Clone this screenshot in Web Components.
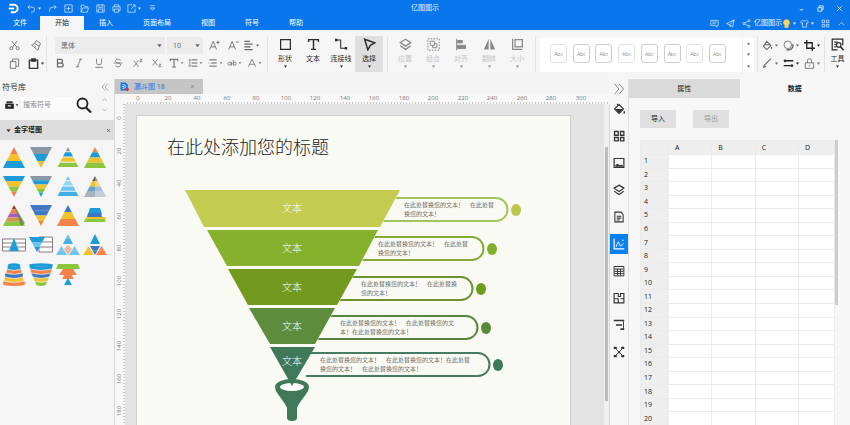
<!DOCTYPE html>
<html lang="zh-CN">
<head>
<meta charset="utf-8">
<title>亿图图示</title>
<style>
html,body{margin:0;height:100%}
body{font:7px/10px "Open Sans","Noto Sans CJK SC",sans-serif;color:#333;background:#f5f5f5;overflow:hidden}
</style>
</head>
<body>
<app-shell></app-shell>
<script>
const RESET = `:host,*{box-sizing:border-box}button,select,input{font:inherit;color:inherit;border:0;background:none;margin:0;padding:0;border-radius:0;outline:0}button{display:flex;align-items:center;justify-content:center;white-space:nowrap}`;

function define(name, render) {
  customElements.define(name, class extends HTMLElement {
    connectedCallback() {
      if (this.shadowRoot) return;
      this.attachShadow({ mode: 'open' }).innerHTML = render(this);
    }
  });
}

/* Line icons on a 16-unit grid */
const ICONS = {
  logo: '<path d="M2 2.5h6.5a5.5 5.5 0 0 1 0 11H4" stroke-width="2.8"/><path d="M1 8h8" stroke-width="2.6"/>',
  undo: '<path d="M5 2 1.500 5.500 5 9M2 5.500h7a4.500 4.500 0 0 1 0 9H7"/>',
  redo: '<path d="m11 2 3.500 3.500L11 9M14 5.500H8A5 5 0 0 0 3 11v3"/>',
  plus: '<path d="M1.500 1.500h13v13h-13zM8 4.500v7M4.500 8h7"/>',
  folder: '<path d="M2 14V2h5l2 2.500h4V7M2 14.500h11l2-7.500H5z"/>',
  save: '<path d="M1.500 1.500h13v13h-13zM5 2v4h6V2M4 14V9h8v5"/>',
  print: '<path d="M4 5V1.500h8V5M4 11.500H1.500V5h13v6.500H12M4 9h8v5.500H4z"/>',
  export: '<path d="M9 1.500H1.500v13h13V8M7 9l7-7M10 1.500h4.500V6"/>',
  more: '<path d="M4 3h8M4 7l4 4 4-4z"/>',
  min: '<path d="M4 11h8" stroke-width="2"/>',
  restore: '<path d="M5 5V2h9v8h-3M2 6h9v8H2z" stroke-width="2"/>',
  close: '<path d="m3 3 10 10M13 3 3 13" stroke-width="2"/>',
  chat: '<path d="M1.500 2.500h13v9H12v3l-3-3H1.500zM4 5.500h8M4 8.500h6"/>',
  send: '<path d="M1 8 14.500 1.500 12 14l-5-3.500zM7 10.500V14l2-2M14 2 7 10"/>',
  share: '<circle cx="3.500" cy="8" r="2"/><circle cx="12.500" cy="3" r="2"/><circle cx="12.500" cy="13" r="2"/><path d="m5 7 6-3M5 9l6 3"/>',
  bulb: '<path d="M8 1a5.500 5.500 0 0 0-3 10v4h6v-4A5.500 5.500 0 0 0 8 1z" fill="#ffd56a" stroke="#f6c04a"/>',
  shirt: '<path d="M5 2 1 5l2 3 1.500-1v7.500h7V7L13 8l2-3-4-3c-1 2-5 2-6 0z"/>',
  apps: '<path d="M2 2h4.500v4.500H2zM9.500 2H14v4.500H9.500zM2 9.500h4.500V14H2zM9.500 9.500H14V14H9.500z"/>',
  grid: '<path d="M2 2h5v5H2zM10 2h4.500v5H10zM2 10h5v4.500H2zM10 10h4.500v4.500H10z" stroke-width="1.700"/>',
  up: '<path d="m3 11 5-5 5 5"/>',
  down: '<path d="m3 6 5 5 5-5"/>',
  dright: '<path d="m2 1 6 7-6 7M8 1l6 7-6 7"/>',
  dleft: '<path d="M8 1 2 8l6 7M14 1 8 8l6 7"/>',
  tri: '<path d="M3 5h10l-5 7z" fill="currentColor" stroke="none"/>',
  triup: '<path d="M3 11h10L8 4z" fill="currentColor" stroke="none"/>',
  cut: '<circle cx="3.500" cy="12" r="2.200"/><circle cx="12.500" cy="12" r="2.200"/><path d="m5 10 7-8.500M11 10 4 1.500"/>',
  brush: '<path d="m8 1 6 4-2 4-7-4zM5 5C3 7 2 7 1 7l9 8 2-6M5 11l2-2"/>',
  copy: '<path d="M2 5h8v10H2zM5 5V1.500h9V12h-4"/>',
  paste: '<path d="M2 3h12v12H2z" stroke-width="2"/><path d="M5 1h6v4H5z" fill="currentColor"/>',
  b: '<path d="M4 2h5a3 3 0 0 1 0 6H4zM4 8h6a3 3 0 0 1 0 6H4z" stroke-width="2"/>',
  i: '<path d="M8 2h5M3 14h5M10.500 2l-5 12"/>',
  u: '<path d="M4 1v6a4 4 0 0 0 8 0V1M2 15h12"/>',
  s: '<path d="M12 4c-1-3-8-3-8 1 0 2 2 2.500 4 3s4 1 4 3c0 4-7 4-8 1M1 8h14"/>',
  sup: '<path d="m1 4 8 10M9 4 1 14M11 2h3l-3 4h4"/>',
  sub: '<path d="m1 2 8 10M9 2 1 12M11 10h3l-3 4h4"/>',
  tt: '<path d="M2 5V2h12v3M8 2v11M5 14.500h6" stroke-width="1.700"/>',
  list: '<path d="M6 3h9M6 8h9M6 13h9" stroke-width="1.600"/><path d="M1 4l2-2 2 2M1 12l2 2 2-2M3 3v10"/>',
  lines: '<path d="M2 3h12M5 8h9M2 13h12M1 8h1" stroke-width="1.600"/>',
  ab: '<circle cx="4" cy="9" r="2.500"/><path d="M7 6v6M10 3v9"/><circle cx="12.500" cy="9" r="2.500"/>',
  a: '<path d="m2 14 6-12 6 12M4.500 10h7"/>',
  abig: '<path d="m1 14 5-12 5 12M3 10h6M13 1v5M10.500 3.500h5"/>',
  asmall: '<path d="m1 14 5-12 5 12M3 10h6M11.500 3h4"/>',
  align: '<path d="M2 2h8M2 6h12M2 10h9M2 14h12" stroke-width="1.500"/>',
  rect: '<path d="M2 2h12v12H2z" stroke-width="1.500"/>',
  text: '<path d="M2 5V2h12v3M8 2v12M5 14h6" stroke-width="1.800"/>',
  conn: '<path d="M1 2.500h6v10h6" stroke-width="1.300"/><path d="M0 1h3v3H0zM12 11h3v3h-3z" fill="currentColor" stroke="none"/>',
  cursor: '<path d="M2 1.500 14.500 6 9 9l-3 5.500z" stroke-width="1.800"/>',
  layers: '<path d="m8 1.500 6.500 4L8 10 1.500 5.500zM1.500 9.500 8 14l6.500-4.500" stroke-width="1.600"/>',
  group: '<path d="M1 1h14v14H1z" stroke-dasharray="2 1.500"/><path d="M4 4h5v5H4zM7 9v3h5V7H9"/>',
  left: '<path d="M2 1v14"/><path d="M3 3h6v3H3zM3 9h10v4H3z" fill="currentColor"/>',
  flip: '<path d="M7 1v13H1zM9 1v13h6z" fill="currentColor" stroke="none"/>',
  size: '<path d="M2 1v13h12M5 2h9v9H5z" stroke-width="1.500"/>',
  bucket: '<path d="m7 2 6 6-6 6-5-5zM4 7h8M14 10v3" stroke-width="1.500"/>',
  bucketf: '<path d="m8 2 6 6-6 6-6-6zM6 4V1" stroke-width="1.500"/><path d="M3 8h10l-5 6zM14 11h2v3h-2z" fill="currentColor" stroke="none"/>',
  shadow: '<circle cx="7" cy="7" r="5.500"/><path d="M5 14c6 2 11-3 9-8" stroke-width="2"/>',
  crop: '<path d="M4 0v12h12M0 4h12v12" stroke-width="1.900"/>',
  pen: '<path d="m2 14 1-3L13 1M2 14l4-2" stroke-width="1.600"/>',
  dash: '<path d="M1 4h14M1 11h14M3 2v4M13 9v4" stroke-width="1.900"/>',
  lock: '<path d="M2 7h12v8H2zM5 7V4a3 3 0 0 1 6 0v3M8 10v2"/>',
  tools: '<path d="M14.500 9V1.500h-13v13H8M4 5h4M4 8h2M4 11h2" stroke-width="1.500"/><circle cx="9.500" cy="8.500" r="2.800" stroke-width="1.500"/><path d="m11.500 10.500 4 4.500" stroke-width="2"/>',
  image: '<path d="M1.500 2h13v12h-13z" stroke-width="1.600"/><path d="M3 13v-2l3-2 3 2 2-1 3 2v1z" fill="currentColor" stroke="none"/>',
  doc: '<path d="M2.500 1.500h8l3 3v10h-11zM5 7h6M5 9.500h6M5 12h4" stroke-width="1.400"/>',
  chart: '<path d="M1.500 1v13.500H15" stroke-width="1.600"/><path d="m4 12 3-7 3 6 4-4M12 3h2"/>',
  table: '<path d="M1.500 2h13v12.500h-13zM2 5.500h12M2 8.500h12M2 11.500h12M6 5v9M10 5v9" stroke-width="1.300"/>',
  plan: '<path d="M1.500 2H7v4h3V2h4.500v12.500h-13zM2 9h5v5M10 9h4" stroke-width="1.500"/>',
  gantt: '<path d="M1 2h14M4 8h8M10 13.500h5" stroke-width="2.200"/><path d="M14 3v10"/>',
  mind: '<path d="m3 3 10 10M13 3 3 13"/><path d="M1 1h4v3H1zM11 1h4v3h-4zM1 12h4v3H1zM11 12h4v3h-4zM6.500 6.500h3v3h-3z" fill="currentColor" stroke="none"/>',
  search: '<circle cx="6.500" cy="6.500" r="5" stroke-width="1.800"/><path d="m10 10.500 5 5" stroke-width="2.200"/>',
  library: '<path d="M1 7h14v8H1zM3 3h10v2H3z" fill="currentColor"/><path d="M5 10.500h6" stroke="#fff" stroke-width="2"/>',
  file: '<path d="M1 1h9l4 4v10H1z" fill="#1677ea" stroke="none"/><path d="M4 5h3a3 3 0 0 1 0 6H4M4 8h3" stroke="#fff" stroke-width="1.500"/><circle cx="13" cy="13" r="3" fill="#d5304a" stroke="none"/>'
};
define('ui-icon', el => `<style>:host{display:inline-block;width:11px;height:11px;flex:none}svg{display:block;width:100%;height:100%}</style>
<svg viewBox="0 0 16 16" fill="none" stroke="currentColor" stroke-width="1.200" aria-hidden="true">${ICONS[el.getAttribute('name')]}</svg>`);

const icon = (n, c = '') => `<ui-icon name="${n}" class="${c}"></ui-icon>`;
const btn = (n, label, drop) => `<button aria-label="${label}">${icon(n)}${drop ? icon('tri', 'd') : ''}</button>`;

define('title-bar', () => `<style>${RESET}
:host{display:block;background:#0a76ec;color:#e9f3ff}
.top{display:grid;grid-template-columns:1fr auto 1fr;align-items:center;height:16px}
.quick{display:flex;align-items:center;padding-left:8px}
.quick button{width:16px;height:14px}.quick .logo{width:11px;height:11px;margin-right:5px;color:#fff}
.quick ui-icon{width:9px;height:9px}.quick .wide{width:20px}
ui-icon.d,.quick ui-icon.d{width:5px;height:5px;margin-left:1px}
h1{margin:0;font:inherit;font-size:7px}
.win{display:flex;justify-content:flex-end;padding-right:1px}.win button{width:19px;height:12px}.win ui-icon{width:7px;height:7px}
nav{display:flex;height:14px}
nav a{display:flex;align-items:center;padding:0 15px;color:#fff;text-decoration:none}
nav a:first-child{padding:0 13px}
nav a.on{background:#f5f5f5;color:#222}
.acct{display:flex;align-items:center;margin-left:auto;padding-right:1px}
.acct button{width:16px;height:14px}.acct ui-icon{width:9px;height:9px}.acct ui-icon.d{width:5px;height:5px}.acct .w{width:20px}
</style>
<div class="top"><div class="quick">${icon('logo', 'logo')}
<button class="wide" aria-label="撤销">${icon('undo')}${icon('tri', 'd')}</button>${btn('redo', '重做')}${btn('plus', '新建')}${btn('folder', '打开')}${btn('save', '保存')}${btn('print', '打印')}<button class="wide" aria-label="导出">${icon('export')}${icon('tri', 'd')}</button>${btn('more', '更多')}</div>
<h1>亿图图示</h1>
<div class="win">${btn('min', '最小化')}${btn('restore', '还原')}${btn('close', '关闭')}</div></div>
<nav>${['文件', '开始', '插入', '页面布局', '视图', '符号', '帮助'].map(t => `<a href="#"${t === '开始' ? ' class="on"' : ''}>${t}</a>`).join('')}
<div class="acct">${btn('chat', '反馈')}${btn('send', '发送')}${btn('share', '分享')}<span>亿图图示</span>${icon('bulb')}${icon('tri', 'd')}<button class="w" aria-label="主题">${icon('shirt')}${icon('tri', 'd')}</button>${btn('apps', '应用')}${btn('up', '收起')}</div></nav>`);

define('big-tool', el => `<style>${RESET}
:host{display:block;width:28px}:host([off]) button{color:#c6c6c6}:host([off]) ui-icon{color:#888}
:host([on]) button{background:#dedede}
button{flex-direction:column;justify-content:flex-start;width:100%;height:36px;padding-top:2px;color:#2b2b2b}
.m{width:13px;height:13px;margin-bottom:3px}.d{width:5px;height:5px}
</style><button>${icon(el.getAttribute('icon'), 'm')}<slot></slot>${el.hasAttribute('plain') ? '' : icon('tri', 'd')}</button>`);

define('tool-ribbon', () => `<style>${RESET}
:host{display:flex;align-items:stretch;height:49px;padding:6px 0 7px;background:#f5f5f5;color:#666}
section{display:flex;align-items:center;border-right:1px solid #e2e2e2;flex:none}
.d{width:5px;height:5px;margin-left:1px}
.clip{display:grid;grid-template-columns:23px 20px;grid-auto-rows:18px;width:47px;padding-left:3px}
.clip button:last-child{color:#333}
.font{display:flex;flex-direction:column;align-items:stretch;width:221px;padding:1px 6px 0 8px}
.r{display:flex;align-items:center;height:17px}
.pick{position:relative;display:flex;align-items:center;background:#ebebeb;height:17px;margin-right:2px}
.pick select{appearance:none;width:100%;height:100%;padding-left:6px;font-size:7px}
.pick ui-icon{position:absolute;right:2px;width:7px;height:7px;pointer-events:none}
.f{width:110px}.s{width:36px}.r>button{flex:1}
.fmt{display:grid;grid-template-columns:repeat(11,1fr);height:19px;margin:0 -3px 0 -5px}
.fmt ui-icon{width:10px;height:10px}.fmt ui-icon.d{width:4px;height:4px}
.ins{padding:0 4px 0 3px}.arr{padding:0 4px 0 3px}
.gal{flex:1 1 auto;justify-content:space-between;margin:2px 3px 0 4px;background:#fff;padding-left:10px;border:0}
.sw{display:flex;flex:1;justify-content:space-between;align-items:center;margin:-3px 16px 0 0}
.sw button{width:17px;height:19px;border:1px solid #ccc;border-radius:3px;font-size:5px;color:#888;background:#fff}
.sw button:nth-child(3n+1){border-color:#e2e2e2}
.sc{display:flex;flex-direction:column;justify-content:space-around;height:100%;width:12px;border-left:1px solid #eee}
.sc ui-icon{width:5px;height:5px}
.sty{display:grid;grid-template-columns:22px 20px 22px;grid-auto-rows:18px;border-left:1px solid #e2e2e2;padding:0 1px}
.dk{color:#222}.tools big-tool{width:25px}.tools{border:0}
</style>
<section class="clip">${btn('cut', '剪切')}${btn('brush', '格式刷')}${btn('copy', '复制')}${btn('paste', '粘贴', 1)}</section>
<section class="font"><div class="r"><label class="pick f"><select aria-label="字体"><option>黑体</option></select>${icon('tri')}</label><label class="pick s"><select aria-label="字号"><option>10</option></select>${icon('tri')}</label>${btn('abig', '增大字号')}${btn('asmall', '减小字号')}${btn('align', '对齐', 1)}</div>
<div class="fmt">${btn('b', '加粗')}${btn('i', '斜体')}${btn('u', '下划线')}${btn('s', '删除线')}${btn('sup', '上标')}${btn('sub', '下标')}${btn('tt', '文字', 1)}${btn('list', '行距', 1)}${btn('lines', '列表', 1)}${btn('ab', '大小写', 1)}${btn('a', '颜色', 1)}</div></section>
<section class="ins"><big-tool icon="rect">形状</big-tool><big-tool icon="text" plain>文本</big-tool><big-tool icon="conn">连接线</big-tool><big-tool icon="cursor" on>选择</big-tool></section>
<section class="arr"><big-tool off icon="layers">位置</big-tool><big-tool off icon="group">组合</big-tool><big-tool off icon="left">对齐</big-tool><big-tool off icon="flip">翻转</big-tool><big-tool off icon="size">大小</big-tool></section>
<section class="gal"><div class="sw">${'<button>Abc</button>'.repeat(8)}</div><div class="sc">${btn('triup', '上')}${btn('tri', '下')}${btn('tri', '展开')}</div></section>
<section class="sty">${btn('bucket', '填充', 1)}${btn('shadow', '阴影', 1)}<button class="dk" aria-label="裁剪">${icon('crop')}${icon('tri', 'd')}</button>${btn('pen', '线条', 1)}<button class="dk" aria-label="线型">${icon('dash')}${icon('tri', 'd')}</button>${btn('lock', '锁定', 1)}</section>
<section class="tools"><big-tool icon="tools">工具</big-tool></section>`);

/* Pyramid thumbnails on a 24-unit grid */
const B = '#1b9bd7', Y = '#f2c12e', G = '#8cc63f', O = '#f58349', N = '#3f77c2', A = '#8b97a3', L = '#6cc5f0';
function bands(colors, down, gap = 0, x0 = 1, y0 = 1, w = 22, h = 21) {
  const n = colors.length, cx = x0 + w / 2, step = h / n;
  return colors.map((c, i) => {
    const a = i * step, b = (i + 1) * step - gap;
    const half = y => (down ? h - y : y) / h * w / 2;
    return `<path fill="${c}" d="M${cx - half(a)} ${y0 + a}H${cx + half(a)}L${cx + half(b)} ${y0 + b}H${cx - half(b)}z"/>`;
  }).join('');
}
/* Stack of curved bands; each entry is [top half-width, bottom half-width, colour] */
const drum = rows => rows.map(([a, b, c], i) => { const y = 3 + i * 4; return `<path fill="${c}" stroke="#f5f5f5" stroke-width=".4" d="M${12 - a} ${y}Q12 ${y + 3} ${12 + a} ${y}L${12 + b} ${y + 4}Q12 ${y + 7} ${12 - b} ${y + 4}z"/>`; }).join('') + `<ellipse cx="12" cy="3" rx="${rows[0][0]}" ry="1.800" fill="${rows[0][2]}"/>`;
const ruled = '<path fill="#fff" stroke="#6d5a62" stroke-width=".8" d="M.5 6h23v12H.5zM.5 10h23M.5 14h23"/>';
const THUMBS = [
  bands([O, Y, B].flatMap((c, i) => i ? [c] : [c])), bands([A, B, Y], 1), bands([A, B, Y, G], 0, 1), bands([O, B, Y, G]),
  bands([B, Y, G, O], 1), bands([A, B, Y, G, B], 1), bands([L, '#8fd4f4', L, '#41afe5'], 0, 1),
  bands(['#665044', Y, '#6e9fc4', '#a9b3bd']) + '<path fill="#fff" opacity=".35" d="m12 1 11 21H12z"/>',
  bands(['#8b3c3c', O, '#a85fc0', '#cf9552', G]) + '<path fill="#467c35" opacity=".6" d="m12 1 11 18-4 3z"/>',
  bands([N, N, Y, O], 1), bands([N, Y, O]),
  `<path fill="${B}" d="M7 4h10l2 6H5z"/><path fill="${N}" d="M5 9h13l1 4H4z"/><path fill="${Y}" d="M3 13h19l1 3H2z"/><path fill="${G}" d="M2 15h19l2 3H1z"/>`,
  ruled + bands([B, B, B], 0, 0, 7, 5, 10, 13),
  '<path fill="#fff" stroke="#6d5a62" stroke-width=".8" d="M10 4h13.500v15H10zM10 9h13.500M10 14h13.500"/>' + bands([B, L, B], 1, 0, 0, 4, 16, 15),
  bands([L, '#41afe5'], 0, 0, 7, 1, 10, 10) + bands([L, L], 0, 0, 0, 13, 11, 9) + bands([L, L], 0, 0, 13, 13, 11, 9) + '<path fill="#f3b59d" d="m12 12 4 4-4 6-4-6z"/>',
  bands([B, B], 0, 0, 7, 1, 10, 10) + bands([Y, Y], 0, 0, 0, 13, 11, 9) + bands([O, O], 0, 0, 13, 13, 11, 9) + bands([N, N], 1, 0, 7, 13, 10, 9),
  drum([[6, 7, B], [7, 8, O], [9, 9, N], [9, 10, Y], [11, 11, O]]), drum([[12, 11, B], [11, 10, O], [10, 8, N], [8, 7, Y], [6, 5, G]]),
  `<path fill="${G}" d="M2 2h20l2 5H0z"/><path fill="${O}" d="M7 7h10l4 6H3z"/><path fill="${O}" d="M9 12h6l3 5H6z"/><path fill="${B}" d="m12 16 4 7H8z"/>`
];
define('symbol-panel', () => `<style>${RESET}
:host{display:block;background:#f5f5f5;border-right:1px solid #d8d8d8}
header{display:flex;justify-content:space-between;align-items:center;height:15px;padding:0 5px 0 2px;font-size:8px}
header ui-icon{width:8px;height:8px;color:#777}
.find{display:flex;align-items:center;height:21px;padding:0 3px 0 5px;margin-bottom:5px}
.find input{flex:1;min-width:0;height:15px;margin-left:2px;padding-left:2px;background:#fbfbfb;font-size:7px}
.find input::placeholder{color:#888}
.lib,.mag{color:#222}.lib ui-icon{width:9px;height:9px}.lib .d{width:4px;height:4px;margin-left:1px}
.mag ui-icon{width:16px;height:16px}
.step{display:flex;flex-direction:column;gap:1px;margin-left:5px;color:#777}.step button{height:9px;width:14px}.step ui-icon{width:7px;height:7px}
.cat{display:flex;align-items:center;height:20px;background:#dcdcdc;padding:0 3px 0 5px;gap:2px;font-weight:700;font-size:7px;color:#222}
.cat ui-icon{width:7px;height:7px;color:#444}.cat button{margin-left:auto}.cat button ui-icon{width:5px;height:5px}
.cat h3{margin:0;font:inherit}
.t{display:grid;grid-template-columns:repeat(4,1fr);grid-auto-rows:28px;row-gap:1px;padding:4px 5px 0 0}
.t svg{width:24px;height:24px}
</style>
<header><span>符号库</span>${btn('dleft', '收起面板')}</header>
<div class="find"><button class="lib" aria-label="符号库">${icon('library')}${icon('tri', 'd')}</button><input type="text" aria-label="搜索符号" placeholder="搜索符号"><button class="mag" aria-label="搜索">${icon('search')}</button><div class="step">${btn('up', '上一个')}${btn('down', '下一个')}</div></div>
<div class="cat">${icon('tri')}<h3>金字塔图</h3>${btn('close', '关闭')}</div>
<div class="t">${THUMBS.map((t, i) => `<button aria-label="金字塔图 ${i + 1}"><svg viewBox="0 0 24 24">${t}</svg></button>`).join('')}</div>`);

define('funnel-chart', () => {
  const tiers = [
    ['#c3cb50', 'M49 74H264L244 111H68z', 94], ['#86b12d', 'M71 114H242L223 150H91z', 134],
    ['#729a1e', 'M92 153H221L201 189H112z', 173], ['#5c8c3c', 'M113 192H199L179 228H134z', 212],
    ['#3f7959', 'M134 231H179L156 270z', 247]];
  const notes = [
    [82, 372, '#a3c45c', '#bdc64b', 268, ['在此处替换您的文本！　在此处替', '换您的文本！']],
    [121, 348, '#86ab3c', '#83b02c', 242, ['在此处替换您的文本！　在此处替', '换您的文本！']],
    [161, 337, '#6b9330', '#6f9c18', 225, ['在此处替换您的文本！　在此处替换', '您的文本！']],
    [200, 342, '#588641', '#56893a', 204, ['在此处替换您的文本！　在此处替换您的文', '本！在此处替换您的文本！']],
    [237, 354, '#457b60', '#3c7958', 184, ['在此处替换您的文本！　在此处替换您的文本！在此处替', '换您的文本！　在此处替换您的文本！']]];
  return `<style>:host{display:block;box-sizing:border-box;width:435px;min-height:320px;background:#f9faf4;border:1px solid #d0d0d0;border-bottom:0}
svg{display:block;width:100%;height:auto}text{font-family:"Noto Sans CJK SC",sans-serif;font-weight:300}</style>
<svg viewBox="1 0 433 330"><text x="31" y="38" font-size="18" fill="#222">在此处添加您的标题</text>
${notes.map(([y, r, c, d, tx, ls]) => `<path fill="none" stroke="${c}" stroke-width="2" d="M170 ${y}H${r - 12}a11 11 0 0 1 0 23H170"/><ellipse cx="${r + 8}" cy="${y + 12}" rx="5" ry="6" fill="${d}"/>${ls.map((l, i) => `<text x="${tx}" y="${y + 9 + i * 9}" font-size="6" fill="#111">${l}</text>`).join('')}`).join('')}
<path fill="#3f7959" d="M139 271a17 8 0 0 1 34 0c0 6-9 13-12 21v10q0 3-5 3t-5-3v-10c-3-8-12-15-12-21z"/><ellipse cx="156" cy="271" rx="12" ry="4" fill="#fff"/>
${tiers.map(([c, p, y], i) => `<path fill="${c}" d="${p}"${i < 4 ? ' stroke="#f9faf4" stroke-width="1" paint-order="stroke"' : ''}/><text x="156" y="${y + 2}" font-size="10" text-anchor="middle" fill="#fff">文本</text>`).join('')}
</svg>`;
});

define('doc-canvas', () => {
  const ticks = Array.from({ length: 16 }, (_, i) => { const x = 23 + Math.round(i * 29.5); return `<text x="${x}" y="6" text-anchor="middle">${i * 20}</text>`; }).join('');
  const vt = Array.from({ length: 10 }, (_, i) => `<text transform="translate(6 ${14 + Math.round(i * 32.6)}) rotate(-90)" text-anchor="middle">${i * 20}</text>`).join('');
  return `<style>${RESET}
:host{display:flex;flex-direction:column;min-width:0;background:#e3e3e3}
.tabs{display:flex;height:15px;background:#f3f3f3}
.tab{display:flex;align-items:center;width:88px;background:#c5c5c5;color:#1677ea;padding:0 8px 0 5px;gap:5px}
.tab ui-icon{width:9px;height:9px}.tab button{margin-left:auto;color:#777}.tab button ui-icon{width:5px;height:5px}
.ruler{flex:none;background:#f7f7f7}.ruler svg{display:block;overflow:hidden}
.h{height:10px}.h svg{width:100%;height:10px}
.row{flex:1;display:flex;min-height:0}
.v{width:10px;overflow:hidden}.v svg{width:10px;height:100%}
text{font:6px "Open Sans",sans-serif;fill:#777}
.stage{flex:1;min-width:0;overflow:hidden;padding:11px 0 0 11px}
.bar{width:6px;background:#f0f0f0;padding:43px 1px 24px;border-right:1px solid #d5d5d5}.bar i{display:block;height:100%;background:#bcbcbc}
</style>
<div class="tabs"><div class="tab">${icon('file')}<span>漏斗图 18</span>${btn('close', '关闭')}</div></div>
<div class="ruler h"><svg><defs><pattern id="p" width="3" height="10" patternUnits="userSpaceOnUse"><path d="M.5 8v2" stroke="#c8c8c8"/></pattern></defs><rect x="10" width="100%" height="10" fill="url(#p)"/>${ticks}</svg></div>
<div class="row"><div class="ruler v"><svg><defs><pattern id="q" width="10" height="3" patternUnits="userSpaceOnUse"><path d="M8 .5h2" stroke="#c8c8c8"/></pattern></defs><rect width="10" height="100%" fill="url(#q)"/>${vt}</svg></div>
<div class="stage"><funnel-chart></funnel-chart></div><div class="bar"><i></i></div></div>`;
});

define('side-rail', () => `<style>${RESET}
:host{display:flex;flex-direction:column;align-items:center;background:#f6f6f6;border-right:1px solid #dedede;color:#333}
button{width:18px;height:20px;margin-bottom:7px;flex:none}button:first-of-type{margin-bottom:1px;color:#777;height:19px}
button.on{background:#0a7ff2;color:#fff}ui-icon{width:12px;height:12px}
</style>${btn('dright', '收起')}${[['bucketf', '填充'], ['grid', '主题'], ['image', '图片'], ['layers', '图层'], ['doc', '备注']].map(a => btn(...a)).join('')}<button class="on" aria-label="图表">${icon('chart')}</button>${[['table', '表格'], ['plan', '平面图'], ['gantt', '甘特图'], ['mind', '思维导图']].map(a => btn(...a)).join('')}`);

define('data-panel', () => `<style>${RESET}
:host{display:flex;flex-direction:column;min-height:0;background:#f7f7f7;overflow:hidden}
.tabs{display:grid;grid-template-columns:1fr 1fr;flex:none}
.tabs button{height:19px;background:#dadada;color:#222}.tabs .on{background:none;font-weight:700}
.act{display:flex;gap:17px;padding:12px 11px;flex:none}.act button{width:36px;height:18px;background:#e0e0e0;color:#222}.act button:disabled{color:#999}
.wrap{display:flex;margin:0 12px 0 11px;flex:1;min-height:0}
table{flex:1;height:286px;border-collapse:collapse;table-layout:fixed;border-top:1px solid #d0d0d0;background:#fff;font-size:7px;line-height:8px;color:#222}
th,td{padding:0;border:1px solid #ebebeb}th{background:#eeeeee;font-weight:400;text-align:left}
thead th{height:14px;padding-left:6px}thead th:first-child{width:28px}thead th:last-child{width:36px}tbody th{padding-left:3px}
.bar{width:3px;height:165px;background:#cdcdcd}
</style>
<div class="tabs" role="tablist"><button role="tab">属性</button><button role="tab" class="on">数据</button></div>
<div class="act"><button>导入</button><button disabled>导出</button></div>
<div class="wrap"><table><thead><tr><th></th>${['A', 'B', 'C', 'D'].map(c => `<th>${c}</th>`).join('')}</tr></thead>
<tbody>${Array.from({ length: 20 }, (_, i) => `<tr><th>${i + 1}</th>${'<td></td>'.repeat(4)}</tr>`).join('')}</tbody></table><div class="bar"></div></div>`);

define('app-shell', () => `<style>
:host{display:flex;flex-direction:column;height:100vh;overflow:hidden}
main{flex:1;min-height:0;display:grid;grid-template-columns:115px minmax(0,1fr) 19px 221px;grid-template-rows:minmax(0,1fr)}
</style><title-bar></title-bar><tool-ribbon></tool-ribbon><main><symbol-panel></symbol-panel><doc-canvas></doc-canvas><side-rail></side-rail><data-panel></data-panel></main>`);
</script>
</body>
</html>
